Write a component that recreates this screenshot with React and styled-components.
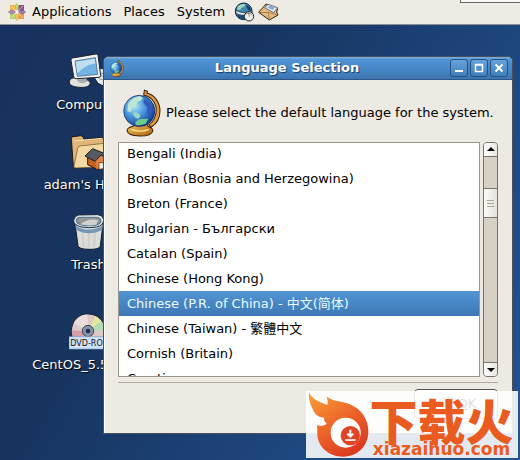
import React, { useEffect, useRef, useState } from "react";
import styled, { createGlobalStyle, css } from "styled-components";

const languages = [
  "Bengali (India)",
  "Bosnian (Bosnia and Herzegowina)",
  "Breton (France)",
  "Bulgarian - Български",
  "Catalan (Spain)",
  "Chinese (Hong Kong)",
  "Chinese (P.R. of China) - 中文(简体)",
  "Chinese (Taiwan) - 繁體中文",
  "Cornish (Britain)",
  "Croatian",
];

const CentosLogo = () => (
  <svg width="20" height="20" viewBox="0 0 20 20">
    <path d="M10 9L7 5l3-4 3 4z" fill="#a9c957" />
    <path d="M10 11l-3 4 3 4 3-4z" fill="#e9b04a" />
    <path d="M9 10L5 7l-4 3 4 3z" fill="#8f65a5" />
    <path d="M11 10l4-3 4 3-4 3z" fill="#77548f" />
    <path d="M3 3h5l1 6-6-1z" fill="#f0b64e" />
    <path d="M12 3h5v5l-6 1z" fill="#914f8c" />
    <path d="M3 12l6-1-1 6H3z" fill="#b8d273" />
    <path d="M11 11l6 1v5h-5z" fill="#ef9b45" />
    <path d="M10 2v16M2 10h16M4 4l12 12M16 4L4 16" stroke="#f7f2ea" strokeWidth="0.5" />
  </svg>
);

const BrowserIcon = () => (
  <svg width="21" height="20" viewBox="0 0 63 60">
    <circle cx="29" cy="28" r="25" fill="#3d86ad" stroke="#0c1c2e" strokeWidth="3" />
    <path d="M10 16c6-9 16-11 24-9l-4 8-8 2-3 7-9-1z" fill="#9fd6bd" />
    <path d="M36 9c9 3 15 11 15 18l-9-4z" fill="#16345e" />
    <path d="M5 24c14 10 34 11 48 1l1 8c-15 10-35 9-48 0z" fill="#e8eef0" stroke="#14212f" strokeWidth="2" />
    <path d="M8 38c6 12 16 16 27 14l-4-13z" fill="#1c4a7a" />
    <ellipse cx="45" cy="43" rx="14" ry="14" fill="#eef0ee" stroke="#222" strokeWidth="3" />
    <path d="M34 38c7-6 15-5 21 1M44 32l2 12" stroke="#555" strokeWidth="2" fill="none" />
  </svg>
);

const MailIcon = () => (
  <svg width="21" height="18" viewBox="0 0 63 54">
    <path d="M2 28L24 3l35 14-3 10 4 9-26 15z" fill="#e2bb82" stroke="#33230f" strokeWidth="3" strokeLinejoin="round" />
    <path d="M20 14l10-10 29 10-12 15z" fill="#dfeaf2" stroke="#3a4650" strokeWidth="2" />
    <path d="M28 13l8-5 14 5-6 8z" fill="#82aac9" />
    <path d="M3 29l28-1 3 22M31 28l27 8" stroke="#8b6232" strokeWidth="2" fill="none" />
  </svg>
);

const ComputerIcon = () => (
  <svg width="40" height="40" viewBox="0 0 120 120">
    <path d="M82 46l32 6v54l-24-12-12-18z" fill="#e6e9ea" stroke="#1b2230" strokeWidth="3" />
    <path d="M92 62l20 4M92 70l20 4M92 80l20 4" stroke="#8d979e" strokeWidth="3" />
    <path d="M4 90c0-8 8-14 20-12l26 4c12 2 18 8 16 14-3 8-14 11-30 10C16 105 4 100 4 90z" fill="#e2e3df" stroke="#1b2230" strokeWidth="3" />
    <path d="M28 74h26l4 14c-6 7-24 7-30-1z" fill="#a8abae" />
    <path d="M14 18L84 6q5-1 6 4l8 60q0 5-5 6l-68 4q-7 0-8-6L9 25q0-6 5-7z" fill="#f2f2ef" stroke="#1b2230" strokeWidth="3" />
    <path d="M21 27l61-10 7 50-61 6z" fill="#72b3e4" stroke="#587b9c" strokeWidth="3" />
    <path d="M23 29l57-9 2 15C60 35 42 50 28 64z" fill="#c0def2" />
  </svg>
);

const HomeIcon = () => (
  <svg width="40" height="40" viewBox="0 0 120 120">
    <path d="M7 20q0-5 5-6l24-3q4 0 6 5l3 6 58-5q7 0 7 7v75l-92 9q-4 0-5-5z" fill="#dfb577" stroke="#221a10" strokeWidth="3" />
    <path d="M26 49q1-6 7-7l72-8q9 0 8 8l-7 62-85 4q-7 0-6-6z" fill="#f5d7a2" stroke="#6d4c24" strokeWidth="2" />
    <path d="M15 27l83-8" stroke="#f7dfb4" strokeWidth="3" />
    <path d="M56 78l26-20 26 16-2 30-22 8-28-14z" fill="#c66224" stroke="#2b160a" strokeWidth="3" />
    <path d="M81 83l17-14 10 12-2 25-23 6z" fill="#e38445" />
    <path d="M90 92h13v18l-13 2z" fill="#fbf4e8" stroke="#50210d" strokeWidth="2" />
    <path d="M48 72l23-22 34 14 7 15-16-10-18 19z" fill="#555b60" stroke="#1d1f22" strokeWidth="3" strokeLinejoin="round" />
  </svg>
);

const TrashIcon = () => (
  <svg width="40" height="40" viewBox="0 0 120 120">
    <path d="M17 28l10 73q2 11 34 11c26 0 31-5 33-11l9-73z" fill="#dcdcd9" stroke="#10192a" strokeWidth="3" />
    <path d="M40 56l4 50M59 58v49M79 56l-4 49" stroke="#cfcfcc" strokeWidth="6" />
    <path d="M18 38c16 19 68 19 84 0l-2 14c-18 16-62 16-79 0z" fill="#7798b5" />
    <path d="M14 25q2-14 15-16l57-1q15 1 18 14 0 19-21 23-20 4-45 0Q14 40 14 25z" fill="#eeefec" stroke="#17283b" strokeWidth="3" />
    <path d="M22 25q1-8 10-9h52q9 1 12 9-1 11-15 14-22 4-40 0-18-3-19-14z" fill="#959592" stroke="#597b9a" strokeWidth="4" />
    <path d="M34 37q24-20 53-12l-5 13q-24 5-48-1z" fill="#d0d0cc" />
  </svg>
);

const DiscIcon = () => (
  <svg width="40" height="40" viewBox="0 0 120 120">
    <circle cx="58" cy="57" r="51" fill="#dfc8c8" stroke="#151a28" strokeWidth="3" />
    <path d="M58 57L14 34A50 50 0 0 1 55 7z" fill="#edddda" />
    <path d="M58 57L79 12q12 6 18 15z" fill="#e4e7a0" />
    <path d="M58 57l39-30q9 12 11 28z" fill="#b4dcb1" />
    <path d="M58 57L8 55q0 20 12 35z" fill="#d49ea6" />
    <circle cx="57" cy="57" r="17" fill="#8894a7" stroke="#3a4353" strokeWidth="3" />
    <circle cx="57" cy="57" r="7" fill="#202e4c" />
    <path d="M0 74h120v37H0z" fill="#cfe2f6" stroke="#7c9dc7" strokeWidth="2" />
    <text x="4" y="102" fontFamily="DejaVu Sans" fontSize="24" fill="#111">DVD-ROM</text>
  </svg>
);

const GlobeIcon = ({ width, height }) => (
  <svg width={width} height={height} viewBox="0 0 112 140">
    <defs>
      <radialGradient id="sea" cx="35%" cy="35%" r="70%">
        <stop offset="0" stopColor="#b5e6fb" />
        <stop offset="0.45" stopColor="#4c9ce0" />
        <stop offset="1" stopColor="#123996" />
      </radialGradient>
      <linearGradient id="brass" x1="0" y1="0" x2="1" y2="1">
        <stop offset="0" stopColor="#f6cf63" />
        <stop offset="1" stopColor="#a95c0d" />
      </linearGradient>
    </defs>
    <path d="M38 98h32l4 12q14 4 14 13-3 15-39 15-35-1-37-16 0-9 18-13z" fill="url(#brass)" stroke="#3b1d05" strokeWidth="3" />
    <path d="M24 118q28 11 52 0" stroke="#ffe394" strokeWidth="4" fill="none" />
    <path d="M63 3l-2 14c25 6 38 25 37 47-1 20-10 32-22 41l7 7c17-11 26-27 26-48C109 36 91 16 71 12l1-6z" fill="#dd9c3d" stroke="#3b1d05" strokeWidth="3" />
    <circle cx="48" cy="64" r="46" fill="url(#sea)" stroke="#102456" strokeWidth="2" />
    <path d="M15 43q12-20 35-23l9 6-9 9-9 2-2 12-11 5-5 13-10-2z" fill="#bde8d3" />
    <path d="M30 66l15 4 7 8-7 10-7-3-7-8z" fill="#99d9c4" />
    <path d="M37 98q7-11 22-10l16-1-8 14q-16 8-30 4z" fill="#6fcc87" />
    <path d="M63 27q21 12 23 38l-6 13-10-9 2-16-12-13z" fill="#3458bb" />
  </svg>
);

const FlameLogo = () => (
  <svg width="63" height="67" viewBox="0 0 189 201">
    <defs>
      <linearGradient id="fire" x1="0" y1="0" x2="0.6" y2="1">
        <stop offset="0" stopColor="#f9a13b" />
        <stop offset="0.5" stopColor="#ef6a2b" />
        <stop offset="1" stopColor="#dc3b20" />
      </linearGradient>
    </defs>
    <path
      d="M9 4C17 22 33 31 64 42C66 33 65 24 61 15C74 28 91 29 112 34C158 44 187 78 187 121C187 165 155 197 112 197C68 197 36 167 34 132C33 120 35 109 32 101C43 107 54 105 62 98C55 91 53 86 55 80C37 80 26 69 22 58C13 42 7 24 9 4Z"
      fill="url(#fire)"
    />
    <circle cx="119" cy="125" r="45" fill="#fff" />
    <circle cx="133" cy="134" r="29" fill="#df4425" />
    <path d="M133 116v19M124 128l9 9 9-9" fill="none" stroke="#fff" strokeWidth="6" />
    <path d="M118 147h31" stroke="#fff" strokeWidth="5" />
  </svg>
);

const desktopItems = [
  { label: "Computer", icon: <ComputerIcon /> },
  { label: "adam's Home", icon: <HomeIcon /> },
  { label: "Trash", icon: <TrashIcon />, last: true },
  { label: "CentOS_5.5_Final", icon: <DiscIcon /> },
];

const App = () => {
  const [selected, setSelected] = useState(6);
  const listRef = useRef(null);

  useEffect(() => {
    listRef.current.scrollTop = 2;
  }, []);

  return (
    <Screen>
      <GlobalStyle />
      <Panel>
        <CentosLogo />
        <Menus>
          <MenuButton type="button">Applications</MenuButton>
          <MenuButton type="button">Places</MenuButton>
          <MenuButton type="button">System</MenuButton>
        </Menus>
        <Launcher type="button" aria-label="Web browser">
          <BrowserIcon />
        </Launcher>
        <Launcher type="button" aria-label="Mail">
          <MailIcon />
        </Launcher>
        <PanelTray />
      </Panel>

      <Desktop>
        {desktopItems.map((item) => (
          <DesktopItem key={item.label} $spaced={item.last}>
            {item.icon}
            <span>{item.label}</span>
          </DesktopItem>
        ))}
      </Desktop>

      <Window>
        <TitleBar>
          <GlobeIcon width="14" height="17" />
          <h1>Language Selection</h1>
          <WindowButton type="button" aria-label="Minimize">
            <svg width="18" height="18" viewBox="0 0 18 18">
              <path d="M5 12h8" stroke="#fff" strokeWidth="2" />
            </svg>
          </WindowButton>
          <WindowButton type="button" aria-label="Maximize">
            <svg width="18" height="18" viewBox="0 0 18 18">
              <path d="M5.500 5.500h7v7h-7zM5 6h8" stroke="#fff" strokeWidth="1.500" fill="none" />
            </svg>
          </WindowButton>
          <WindowButton type="button" aria-label="Close">
            <svg width="18" height="18" viewBox="0 0 18 18">
              <path d="M5.500 5.500l7 7M12.500 5.500l-7 7" stroke="#fff" strokeWidth="2" />
            </svg>
          </WindowButton>
        </TitleBar>

        <WindowBody>
          <Message>
            <GlobeIcon width="38" height="48" />
            <p>Please select the default language for the system.</p>
          </Message>

          <ListRow>
            <LanguageList ref={listRef} role="radiogroup" aria-label="Language">
              {languages.map((name, i) => (
                <Language key={name} $active={i === selected}>
                  <input
                    type="radio"
                    name="language"
                    checked={i === selected}
                    onChange={() => setSelected(i)}
                  />
                  {name}
                </Language>
              ))}
            </LanguageList>
            <ScrollBar>
              <ScrollButton type="button" aria-label="Scroll up">
                <svg width="8" height="5" viewBox="0 0 8 5">
                  <path d="M4 0l4 4H0z" />
                </svg>
              </ScrollButton>
              <Track>
                <Thumb>
                  <i />
                  <i />
                  <i />
                </Thumb>
              </Track>
              <ScrollButton type="button" aria-label="Scroll down" $down>
                <svg width="8" height="5" viewBox="0 0 8 5">
                  <path d="M0 1h8L4 5z" />
                </svg>
              </ScrollButton>
            </ScrollBar>
          </ListRow>

          <Footer>
            <OkButton type="button">
              <svg width="18" height="18" viewBox="0 0 18 18">
                <path d="M17 2v7H8v4L1 8l7-6v3h4V2z" fill="#9fb49a" stroke="#6a6a6a" />
              </svg>
              <span>
                <u>O</u>K
              </span>
            </OkButton>
          </Footer>
        </WindowBody>
      </Window>

      <Watermark>
        <FlameLogo />
        <WatermarkText>
          <strong>下载火</strong>
          <span>xiazaihuo.com</span>
        </WatermarkText>
      </Watermark>
    </Screen>
  );
};

export default App;

const GlobalStyle = createGlobalStyle`
  * {
    box-sizing: border-box;
  }

  body {
    margin: 0;
    font-family: "DejaVu Sans", "Noto Sans CJK SC", sans-serif;
    font-size: 13px;
    line-height: 16px;
    color: #000;
  }

  button {
    font: inherit;
    color: inherit;
    padding: 0;
    margin: 0;
    border: none;
    background: none;
    cursor: pointer;
  }

  svg {
    display: block;
    flex-shrink: 0;
  }
`;

const Screen = styled.div`
  position: relative;
  min-height: 100vh;
  overflow: hidden;
  background: linear-gradient(120deg, #17325e 0%, #17345f 35%, #1f4a84 75%, #235392 100%);
`;

const Panel = styled.header`
  display: flex;
  align-items: center;
  height: 25px;
  padding-left: 7px;
  background: #edebe4;
  border-bottom: 1px solid #8b9299;
`;

const Menus = styled.nav`
  display: flex;
  gap: 12px;
  margin: 0 9px 0 5px;
`;

const MenuButton = styled.button`
  white-space: nowrap;
`;

const Launcher = styled.button`
  margin-right: 3px;
`;

const PanelTray = styled.div`
  align-self: flex-start;
  width: 60px;
  height: 3px;
  margin-left: auto;
  background: #f8f7f4;
  border-left: 1px solid #666;
  border-bottom: 1px solid #666;
`;

const Desktop = styled.main`
  display: flex;
  flex-direction: column;
  align-items: center;
  width: 177px;
  padding-top: 27px;
`;

const DesktopItem = styled.div`
  display: flex;
  flex-direction: column;
  align-items: center;
  gap: 5px;
  margin-bottom: ${(props) => (props.$spaced ? "39px" : "19px")};
  color: #fff;
  text-shadow: 1px 1px 1px #000;
  white-space: nowrap;

  svg {
    text-shadow: none;
  }
`;

const Window = styled.section`
  position: absolute;
  top: 56px;
  left: 103px;
  right: 7px;
  border: 1px solid #4b5058;
  border-radius: 6px 6px 0 0;
  background: #edeae3;
  overflow: hidden;
`;

const TitleBar = styled.div`
  display: flex;
  align-items: center;
  gap: 2px;
  height: 23px;
  padding: 0 4px 0 6px;
  background: linear-gradient(#7db1e2, #4f93d4 12%, #4586c6 60%, #3c74ae);
  border-bottom: 1px solid #2c5788;

  h1 {
    flex: 1;
    margin: 0;
    font-size: 13px;
    text-align: center;
    color: #fff;
    text-shadow: 1px 1px 1px #1c3d63;
  }
`;

const WindowButton = styled.button`
  border: 1px solid #25517f;
  border-radius: 3px;
  background: linear-gradient(#68a3dc, #3f7dbb);
  width: 18px;
  height: 18px;
  display: flex;
  align-items: center;
  justify-content: center;
`;

const WindowBody = styled.div`
  padding: 9px 14px 14px 13px;
  border-left: 1px solid #fff;
`;

const Message = styled.div`
  display: flex;
  align-items: center;
  gap: 5px;
  padding: 0 0 5px 5px;

  p {
    margin: 0;
    white-space: nowrap;
  }
`;

const ListRow = styled.div`
  display: flex;
  gap: 3px;
`;

const LanguageList = styled.div`
  flex: 1;
  min-width: 0;
  height: 235px;
  overflow: hidden;
  background: #fff;
  border: 1px solid #9c9687;
`;

const Language = styled.label`
  display: flex;
  align-items: center;
  height: 25px;
  padding-left: 8px;
  white-space: nowrap;
  cursor: pointer;

  ${(props) =>
    props.$active &&
    css`
      color: #e9fbff;
      background: linear-gradient(#5294d4, #3d78b4);
    `}

  input {
    appearance: none;
    width: 0;
    height: 0;
    margin: 0;
  }
`;

const ScrollBar = styled.div`
  display: flex;
  flex-direction: column;
  width: 15px;
  border: 1px solid #77736a;
  border-radius: 4px;
  background: #d7d1c5;
  overflow: hidden;
`;

const ScrollButton = styled.button`
  display: flex;
  align-items: center;
  justify-content: center;
  height: 14px;
  background: linear-gradient(90deg, #fff, #e9e6df);
  border-${(props) => (props.$down ? "top" : "bottom")}: 1px solid #77736a;
`;

const Track = styled.div`
  flex: 1;
  padding-top: 31px;
`;

const Thumb = styled.div`
  display: flex;
  flex-direction: column;
  align-items: center;
  justify-content: center;
  gap: 2px;
  height: 30px;
  background: linear-gradient(90deg, #fbfaf8, #e6e2da);
  border: solid #77736a;
  border-width: 1px 0;

  i {
    width: 7px;
    height: 1px;
    background: #aaa69c;
  }
`;

const Footer = styled.footer`
  display: flex;
  justify-content: flex-end;
  margin-top: 5px;
  padding-top: 6px;
  border-top: 1px solid #aca99f;
`;

const OkButton = styled.button`
  display: flex;
  align-items: center;
  justify-content: center;
  gap: 4px;
  width: 84px;
  height: 30px;
  border: 1px solid #55524c;
  border-radius: 4px;
  background: linear-gradient(#fff, #e6e2da);
`;

const Watermark = styled.aside`
  position: absolute;
  right: 2px;
  bottom: 2px;
  display: flex;
  width: 212px;
  height: 67px;
  background: rgba(255, 255, 255, 0.88);
`;

const WatermarkText = styled.div`
  flex: 1;
  display: flex;
  flex-direction: column;
  align-items: center;
  padding: 7px 4px 0 0;
  color: #ea5b20;

  strong {
    font-family: "Noto Sans CJK SC", sans-serif;
    font-size: 48px;
    font-weight: 900;
    line-height: 43px;
    white-space: nowrap;
  }

  span {
    font-size: 17px;
    font-weight: bold;
    line-height: 16px;
  }
`;
